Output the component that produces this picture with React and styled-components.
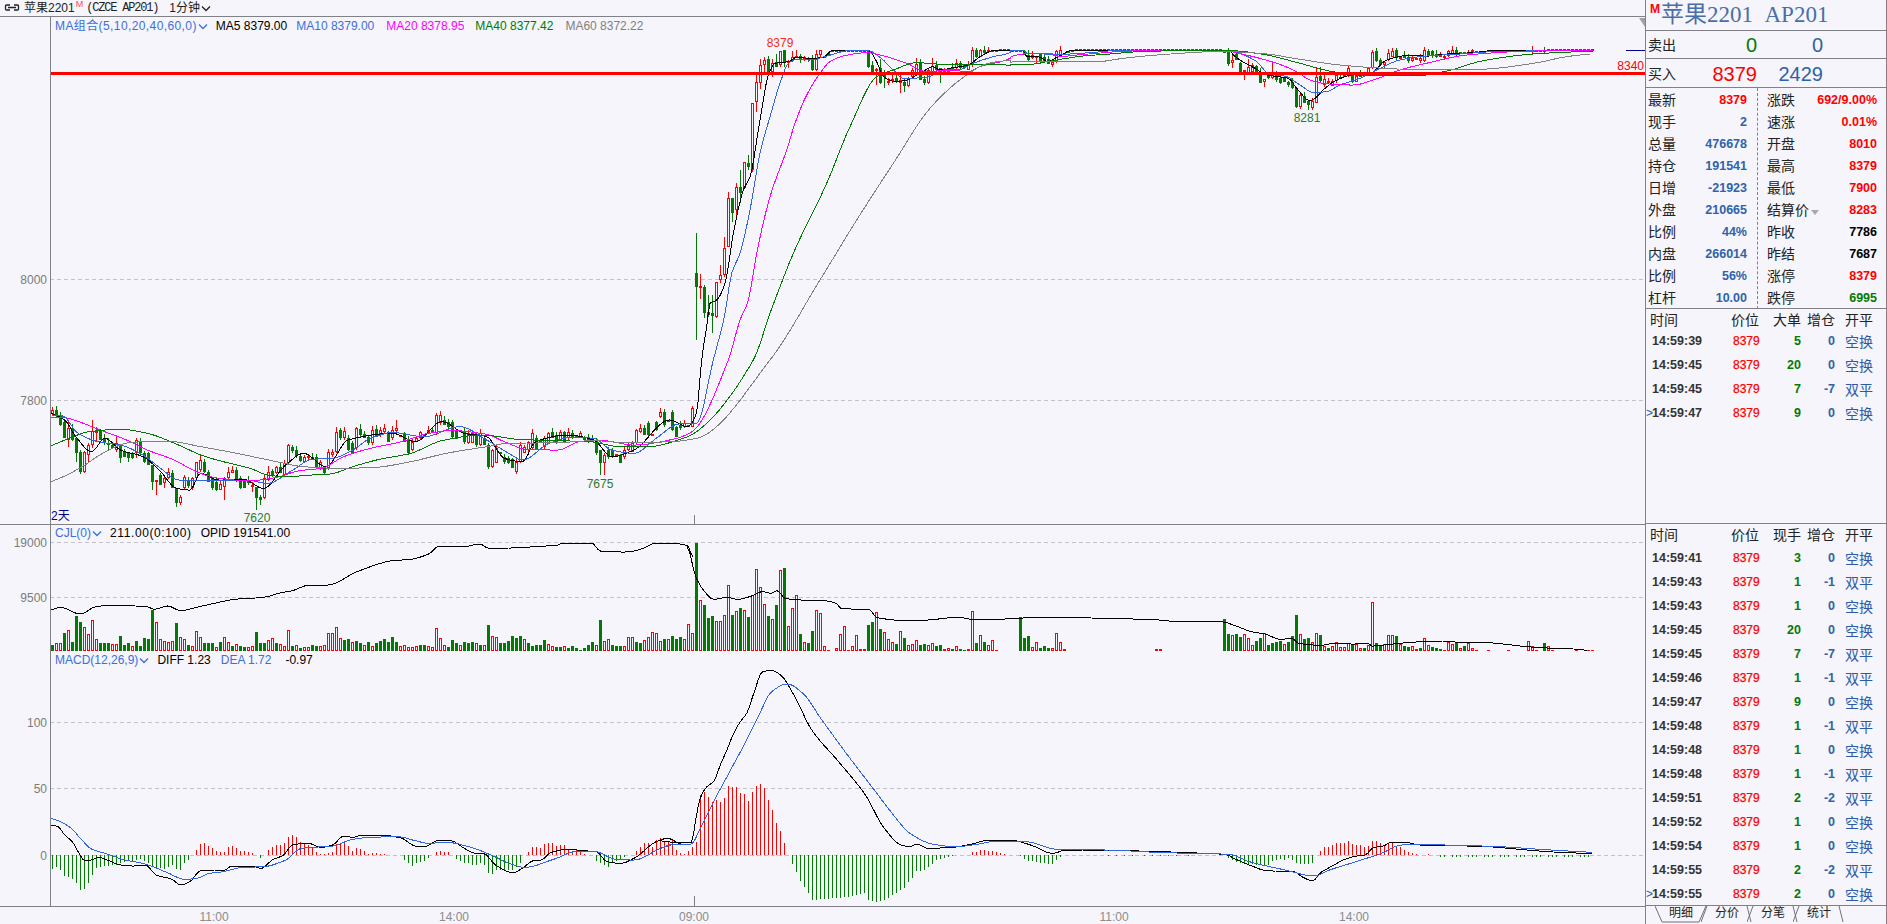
import React from 'react';
import styled, { createGlobalStyle } from 'styled-components';

const BG = '#f5f5fb';
const RED = '#ff0000';
const GREEN = '#047a04';
const BLUE = '#2f62a8';
const LINE = '#808088';
const CJK = '"Liberation Sans", "Noto Sans CJK SC", sans-serif';

/* ---------- coordinate helpers: each reads px from a measured crop ---------- */
const Z = {
  z5: [(x) => x / 2.24, (y) => y / 3 + 400],
  z6: [(x) => x / 3 + 660, (y) => y / 3 + 20],
  z7: [(x) => x / 2.24 + 660, (y) => y / 3 + 520],
  z8: [(x) => x / 3 + 1200, (y) => y / 3 + 30],
  z9: [(x) => x / 2.24, (y) => y / 3 + 650],
  z10: [(x) => x / 3 + 1340, (y) => y / 3 + 560],
  z11: [(x) => x / 3 + 990, (y) => y / 3 + 40],
  z12: [(x) => x / 3 + 50, (y) => y / 3 + 410],
};
const conv = (k, pts) => pts.map(([x, y]) => [Z[k][0](x), Z[k][1](y)]);
const cx = (i) => 52 + 4 * i;
const idx = (x) => Math.round((x - 52) / 4);

/* monotone cubic through the measured points, sampled every couple of pixels */
const smooth = (pts) => {
  const d = [];
  for (let k = 0; k < pts.length - 1; k++) {
    d.push((pts[k + 1][1] - pts[k][1]) / Math.max(pts[k + 1][0] - pts[k][0], 0.5));
  }
  const m = pts.map((_, k) => {
    if (k === 0) return d[0];
    if (k === pts.length - 1) return d[d.length - 1];
    if (d[k - 1] * d[k] <= 0) return 0;
    return (2 * d[k - 1] * d[k]) / (d[k - 1] + d[k]);
  });
  const out = [pts[0]];
  for (let k = 0; k < pts.length - 1; k++) {
    const [x0, y0] = pts[k];
    const [x1, y1] = pts[k + 1];
    const h = x1 - x0;
    if (h <= 0.5) { out.push(pts[k + 1]); continue; }
    const n = Math.max(1, Math.round(h / 2));
    for (let j = 1; j <= n; j++) {
      const t = j / n;
      const a = (1 + 2 * t) * (1 - t) * (1 - t);
      const b = t * (1 - t) * (1 - t);
      const c = t * t * (3 - 2 * t);
      const e = t * t * (t - 1);
      out.push([x0 + h * t, a * y0 + b * h * m[k] + c * y1 + e * h * m[k + 1]]);
    }
  }
  return out;
};
const toPts = (p) => smooth(p).map(([x, y]) => `${x.toFixed(1)},${y.toFixed(1)}`).join(' ');

/* ---------- moving averages ---------- */
const MA5 = [
  ...conv('z5', [[115,40],[145,60],[170,110],[205,155],[235,115],[270,150],[320,170],[360,215],[395,265],[425,270],[450,220],[490,240],[545,238],[590,265],[640,195],[680,160],[730,200],[780,120],[880,100],[930,125],[990,65],[1040,100],[1090,110],[1130,175],[1170,185],[1200,125],[1270,105],[1330,120],[1370,170],[1420,150],[1500,60],[1540,80],[1560,40]]),
  ...conv('z6', [[125,1020],[140,920],[150,850],[170,840],[195,790],[220,640],[250,510],[270,470],[300,300],[325,165],[345,130],[385,125],[410,112],[450,115],[490,112],[515,92],[625,92],[650,125],[670,170],[710,185],[740,180],[780,160],[820,140],[840,150],[880,143],[925,135],[960,110],[1000,92],[1050,90]]),
  ...conv('z11', [[60,32],[100,32],[110,50],[130,48],[150,52],[175,65],[195,55],[215,45],[240,32],[300,30],[620,31],[720,31]]),
  ...conv('z8', [[100,75],[120,90],[165,115],[200,135],[265,145],[290,175],[330,212],[345,205],[375,175],[410,150],[470,132],[510,130],[560,90],[620,77],[680,78],[740,72],[820,68],[880,62],[1180,61]]),
];
const MA10 = [
  ...conv('z5', [[115,45],[140,48],[175,100],[220,125],[270,135],[320,165],[360,205],[400,240],[440,240],[490,240],[550,240],[600,250],[650,215],[700,178],[745,175],[790,150],[830,115],[880,98],[950,110],[1030,80],[1090,120],[1140,160],[1170,180],[1230,130],[1280,112],[1330,115],[1370,150],[1420,160],[1470,115],[1520,72],[1560,70]]),
  ...conv('z6', [[160,1020],[195,880],[215,760],[240,700],[270,570],[300,400],[330,290],[360,190],[385,130],[410,118],[450,120],[500,108],[570,92],[625,92],[660,112],[700,150],[730,175],[800,172],[850,150],[900,148],[940,130],[1000,110],[1050,98]]),
  ...conv('z11', [[60,32],[100,32],[115,42],[140,40],[190,45],[240,42],[300,38],[380,32],[620,31],[720,31]]),
  ...conv('z8', [[100,64],[125,72],[170,95],[205,130],[260,140],[300,165],[340,187],[380,185],[420,165],[480,145],[540,115],[600,90],[680,78],[780,72],[900,64],[1180,61]]),
];
const MA20 = [
  ...conv('z5', [[115,52],[140,52],[170,62],[220,88],[280,118],[330,150],[390,180],[440,215],[490,235],[560,242],[620,232],[670,212],[720,205],[770,170],[830,145],[900,125],[960,100],[1010,92],[1090,103],[1130,125],[1180,148],[1250,150],[1300,125],[1350,122],[1420,135],[1500,120],[1550,95]]),
  ...conv('z6', [[205,1020],[240,900],[265,840],[290,700],[330,530],[380,390],[405,310],[440,225],[480,160],[510,125],[550,108],[620,98],[660,105],[740,130],[800,155],[870,150],[925,155],[960,140],[1050,115]]),
  ...conv('z11', [[60,52],[100,42],[180,40],[210,50],[260,45],[320,40],[420,33],[620,31],[720,32]]),
  ...conv('z8', [[100,66],[160,80],[230,100],[290,125],[330,150],[385,162],[460,165],[520,150],[600,120],[700,95],[800,75],[1000,63],[1180,61]]),
];
const MA40 = [
  ...conv('z5', [[115,137],[150,118],[200,95],[270,88],[330,100],[400,135],[450,165],[500,185],[560,205],[600,225],[640,230],[700,225],[740,222],[790,200],[850,178],[920,160],[990,122],[1080,105],[1160,118],[1250,122],[1320,125],[1390,140],[1450,140],[1530,115],[1560,95]]),
  ...conv('z6', [[280,1020],[330,880],[400,700],[500,490],[570,320],[650,170],[700,150],[770,128],[835,132],[930,132],[1050,135]]),
  ...conv('z11', [[60,74],[110,74],[170,65],[280,48],[360,42],[430,36],[620,31],[700,31]]),
  ...conv('z8', [[100,62],[200,75],[300,100],[400,125],[500,137],[650,137],[740,123],[850,92],[1000,72],[1180,63]]),
];
const MA60 = [
  ...conv('z5', [[115,245],[150,225],[190,195],[230,160],[290,128],[370,123],[450,140],[530,160],[620,185],[680,200],[760,205],[840,202],[920,185],[1000,160],[1090,140],[1140,130],[1250,128],[1330,122],[1400,128],[1500,125],[1560,115]]),
  ...conv('z6', [[330,1020],[480,780],[590,600],[700,430],[810,265],[920,165],[985,130],[1050,122]]),
  ...conv('z11', [[60,66],[110,65],[320,65],[400,55],[500,45],[620,37],[700,33]]),
  ...conv('z8', [[100,65],[200,72],[300,88],[420,105],[520,113],[640,118],[830,118],[1000,100],[1100,80],[1170,72]]),
];

const interp = (pts, x) => {
  for (let k = 1; k < pts.length; k++) {
    if (x <= pts[k][0]) {
      const [x0, y0] = pts[k - 1];
      const [x1, y1] = pts[k];
      return y0 + ((y1 - y0) * (x - x0)) / Math.max(x1 - x0, 0.01);
    }
  }
  return pts[pts.length - 1][1];
};

/* ---------- candles: [x, colour, bodyTop, bodyBottom, high, low] ---------- */
const C12 = [[6,'r',0,12,-8,14],[18,'g',0,15],[30,'g',15,45],[42,'g',35,85],[54,'r',55,90,30,110],[66,'g',55,90],[78,'g',85,130,85,155],[90,'g',125,185],[102,'r',125,187],[114,'r',105,135,100,160],[126,'r',62,105,30,115],[138,'r',62,70,50,95],[150,'g',60,90],[162,'g',85,100],[174,'g',100,105,85,122],[186,'g',105,115],[198,'r',100,120,75,125],[210,'g',105,145,105,160],[222,'g',125,140],[234,'g',125,145,125,155],[246,'g',130,145],[258,'r',90,130,85,145],[270,'g',92,130],[282,'g',130,155],[294,'g',130,165],[306,'g',165,215,165,240],[318,'r',210,215,210,255],[330,'g',195,225],[342,'r',205,220,195,235],[354,'r',185,205],[366,'g',190,235],[378,'g',235,280,235,290],[390,'r',260,278,255,285],[402,'r',200,235,195,240],[414,'g',210,228],[426,'r',205,235,200,240],[438,'r',155,205,155,212],[450,'r',150,180,135,185],[462,'g',155,185],[474,'g',185,215],[486,'g',205,235],[498,'g',215,240],[510,'r',222,240],[522,'r',205,230,200,270],[534,'r',185,205,170,210],[546,'r',180,190],[558,'g',180,210],[570,'g',205,235],[582,'g',210,235],[594,'g',210,220],[606,'r',225,230,215,245],[618,'g',230,265,230,300],[630,'g',260,270,255,285],[642,'r',205,265],[654,'r',185,210,168,212],[666,'g',182,195],[678,'r',172,190],[690,'g',170,190],[702,'r',160,195],[714,'r',105,160,102,165],[726,'g',110,122,105,128],[738,'g',120,138],[750,'g',138,152],[762,'r',140,155],[774,'r',138,145,132,150],[786,'g',140,148],[798,'g',142,175],[810,'r',155,175],[822,'g',170,188],[834,'r',125,175,118,180],[846,'r',125,135],[858,'r',65,125,52,128],[870,'g',60,85,55,90],[882,'r',62,85],[894,'g',85,120],[906,'g',98,130],[918,'r',55,115,50,120],[930,'g',58,75,42,80],[942,'g',72,85],[954,'g',80,100],[966,'r',60,100,48,104],[978,'g',58,80],[990,'r',60,75],[1002,'r',55,65,42,70],[1014,'g',65,95],[1026,'r',60,85],[1038,'r',55,62,30,70]];
const C5 = [[905,'g',100,125],[915,'g',120,160],[925,'r',125,150],[935,'r',115,125],[945,'r',95,115],[955,'r',90,100],[965,'g',90,100],[975,'r',45,100],[985,'r',45,70,32,75],[995,'g',60,75],[1005,'g',65,80],[1015,'g',65,110],[1025,'g',90,118],[1035,'g',95,125],[1045,'r',100,130],[1055,'r',100,130],[1065,'g',105,135],[1075,'r',100,135],[1085,'g',115,135],[1095,'g',135,200],[1105,'r',150,200],[1115,'r',145,190],[1125,'g',170,185],[1135,'g',175,190],[1145,'g',178,205],[1155,'r',185,215],[1165,'r',135,185],[1175,'r',140,160],[1185,'r',125,150],[1195,'r',100,145],[1205,'g',115,150],[1215,'r',115,140],[1225,'r',100,130],[1235,'g',95,115],[1245,'g',105,125],[1255,'r',95,120],[1265,'g',95,125],[1275,'r',95,115],[1285,'g',100,115],[1295,'r',100,115],[1305,'g',110,120],[1315,'g',115,125],[1325,'g',115,125],[1335,'g',120,160],[1345,'g',150,190,150,225],[1355,'r',165,190,160,225],[1365,'g',150,170],[1375,'g',150,170],[1385,'g',165,190],[1395,'r',150,170],[1405,'r',135,150],[1415,'r',130,155],[1425,'r',90,130],[1435,'r',85,95],[1445,'g',85,105],[1455,'g',70,105],[1465,'g',65,90],[1475,'r',35,50,25,55],[1490,'g',35,75],[1505,'g',35,90],[1515,'g',80,110],[1525,'g',75,85],[1535,'r',70,80],[1550,'r',25,80],[1560,'r',0,25]];
const C6 = [[109,'g',760,800,640,960],[121,'r',798,805,762,838],[133,'g',800,880,795,895],[145,'g',875,885,825,890],[157,'g',878,888,825,940],[169,'r',785,890,785,895],[181,'r',765,780,735,790],[193,'r',683,765,650,770],[205,'r',535,680,515,682],[217,'g',535,578,535,605],[229,'r',502,570,490,600],[241,'g',502,518,450,550],[253,'r',427,505,427,508],[265,'g',430,440,405,450],[277,'r',248,450,248,455],[289,'r',187,247,165,275],[301,'r',135,190,118,208],[313,'r',120,135,112,155],[325,'g',118,155],[337,'r',128,155,118,170],[349,'g',125,140,102,142],[361,'r',92,135,92,140],[373,'g',90,125,90,140],[385,'r',123,125,120,145],[397,'r',112,120,92,125],[409,'r',108,112,90,115],[421,'g',108,118,102,128],[433,'r',112,118,108,122],[445,'g',115,120,112,125],[457,'g',118,150],[469,'r',103,150,90,152],[481,'r',90,105,90,115],
  [625,'g',92,140],[637,'g',135,155],[649,'r',147,150,145,195],[661,'g',145,190,118,192],[673,'g',165,170,150,205],[685,'r',182,186,175,195],[697,'r',178,182,165,190],[709,'g',175,187,165,190],[721,'r',180,190,165,218],[733,'g',185,198,175,215],[745,'r',178,198,172,200],[757,'r',150,172],[769,'r',132,160,115,162],[781,'g',128,180],[793,'g',178,190],[805,'r',150,188],[817,'r',138,160,115,162],[829,'g',135,150],[841,'g',145,155,145,188],[853,'r',150,155],[865,'r',150,155],[877,'g',140,148],[889,'r',130,145,118,147],[901,'g',128,145],[913,'g',135,145],[925,'r',135,150],[937,'r',90,135],[949,'g',90,112],[961,'r',90,110],[973,'g',90,98],[985,'r',90,95]];
const C11 = [[100,'g',32,46],[115,'g',45,60,30,62],[127,'r',45,55,33,57],[139,'r',48,50,48,68],[151,'g',42,65],[163,'g',50,62],[175,'g',58,72],[187,'r',65,75],[199,'r',32,62,30,68],[211,'r',30,50]];
const C8 = [[72,'g',65,70],[85,'g',65,102],[97,'r',90,100,70,115],[109,'g',72,90],[121,'g',98,125],[133,'r',120,125,120,150],[145,'r',112,130,88,132],[157,'r',105,125],[169,'g',108,125],[181,'g',125,158],[193,'r',148,155,148,170],[205,'g',135,145],[217,'r',125,145,100,147],[229,'g',135,150],[241,'g',145,160],[253,'g',145,155],[265,'g',155,165],[277,'g',155,175],[289,'g',175,230,175,235],[301,'r',195,230],[313,'g',198,218,185,220],[325,'g',212,225,212,240],[337,'r',212,235],[349,'r',140,218,112,220],[361,'g',138,152,112,155],[373,'r',148,165],[385,'r',152,160],[397,'r',152,168],[409,'r',135,152],[421,'g',140,145],[433,'r',135,142],[445,'r',115,135],[457,'g',135,155],[469,'r',138,155],[481,'g',130,140,120,142],[493,'g',135,137],[505,'r',115,135],[517,'r',65,115,60,117],[529,'g',63,92],[541,'g',90,105],[553,'r',95,105,95,115],[565,'r',70,90],[577,'r',62,80],[589,'g',60,85],[601,'r',80,85],[613,'g',75,85],[625,'g',82,92],[637,'r',85,92],[649,'r',85,90],[661,'r',85,92],[673,'r',60,92],[685,'g',62,78],[697,'g',62,78],[709,'g',72,80],[721,'r',75,80],[733,'r',78,85],[745,'r',62,78],[757,'r',60,75],[769,'g',60,72],[805,'r',65,70],[817,'r',60,65],[997,'r',61,66],[1037,'g',61,65]];

const LAST = 385;
const buildCandles = () => {
  const slots = new Array(LAST + 1).fill(null);
  const put = (list, k) => list.forEach(([x, c, t, b, h, l], n) => {
    const i = idx(Z[k][0](x));
    const fy = Z[k][1];
    const top = fy(t);
    const bot = fy(b);
    const pad = 1 + (n * 7) % 4;
    slots[i] = { c, top, bot, hi: h === undefined ? top - pad : fy(h), lo: l === undefined ? bot + ((n * 5) % 3) : fy(l) };
  });
  put(C12, 'z12');
  put(C5, 'z5');
  put(C6, 'z6');
  put(C11, 'z11');
  put(C8, 'z8');
  for (let i = 0; i <= LAST; i++) {
    if (!slots[i]) {
      const y = interp(MA5, cx(i));
      slots[i] = { c: i % 3 ? 'g' : 'r', top: y - 1, bot: y + 1, hi: y - 1, lo: y + 1 };
    }
  }
  return slots;
};
const candles = buildCandles();

/* ---------- volume: tops; positive red, negative green ---------- */
const VOL_LEFT = [-735,730,730,-700,690,-725,-648,-665,680,702,660,716,-728,-728,-728,733,733,-708,-735,-728,738,-722,-738,-714,-718,-630,665,718,722,725,722,-670,712,716,-735,738,692,712,-730,-728,-730,740,-725,712,725,-738,732,-738,-740,742,738,-695,-728,-728,720,715,-730,732,738,690,-738,735,-745,742,742,-735,-738,738,735,700,698,682,715,-720,-718,725,-722,-728,735,-725,738,-730,-722,-718,-725,-712,-725,738,735,740,740,738,-735,-735,738,740,685,715,735,-742,-720,-728,735,-725,-730,-725,730,-735,735,-675,708,712,-730,-728,-722,-708,-714,-708,716,-730,-738,-735,-735,-720,732,738,-740,-740,738,-745,-738,-745,-750,-745,-735,-725,735,-660,722,716,-735,-738,-738,738,712,712,-725,-730,720,712,697,698,722,-716,716,-708,-718,-712,718,672,700];
const V7 = [[81,'g',68],[90,'r',240],[99,'g',255],[108,'g',295],[117,'g',288],[126,'r',303],[135,'r',303],[144,'r',286],[153,'r',195],[162,'g',285],[171,'r',273],[180,'g',265],[189,'r',270],[198,'g',291],[207,'r',225],[216,'r',148],[225,'r',202],[234,'r',252],[243,'g',288],[252,'r',297],[261,'g',255],[270,'r',150],[279,'g',145],[288,'r',318],[297,'r',265],[306,'r',226],[315,'g',342],[324,'r',366],[333,'g',370],[342,'g',333],[351,'r',270],[360,'r',280],[369,'r',378],[378,'r',390],[396,'r',384],[405,'r',342],[414,'r',318],[423,'r',390],[432,'r',378],[441,'r',345],[450,'r',388],[459,'r',387],[468,'g',315],[477,'g',306],[486,'r',277],[495,'g',327],[504,'r',335],[513,'r',357],[522,'r',366],[531,'g',372],[540,'r',334],[549,'g',354],[558,'r',375],[567,'r',372],[576,'r',360],[585,'g',375],[594,'g',372],[603,'r',376],[612,'r',370],[621,'g',378],[630,'g',375],[639,'r',387],[648,'r',384],[657,'g',387],[666,'r',378],[675,'g',387],[684,'g',390],[693,'r',388],[702,'r',273],[711,'g',369],[720,'r',345],[729,'g',366],[738,'r',375],[747,'r',360],[756,'r',390],[807,'g',291],[816,'g',354],[825,'g',348],[834,'r',382],[843,'r',366],[852,'g',384],[861,'g',378],[870,'g',384],[879,'r',384],[888,'r',340],[897,'r',366],[906,'r',387],[1113,'r',387],[1120,'r',387],[1265,'g',297],[1274,'g',342],[1283,'r',345],[1292,'g',342],[1301,'g',352],[1310,'r',342],[1319,'r',354],[1328,'r',375],[1337,'g',363],[1346,'g',355],[1355,'r',340],[1364,'g',375],[1373,'g',368],[1382,'g',365],[1391,'g',363],[1400,'r',372],[1409,'g',365],[1418,'g',348],[1427,'g',285],[1436,'r',342],[1445,'g',357],[1454,'g',354],[1463,'r',365],[1472,'r',340],[1481,'g',345],[1490,'r',378],[1499,'g',385],[1508,'r',378],[1517,'r',366],[1526,'r',380],[1535,'r',380],[1544,'r',370],[1553,'g',372]];
const V10 = [[0,'r',262],[12,'r',262],[24,'r',250],[36,'g',252],[48,'r',252],[60,'r',265],[72,'g',265],[84,'r',255],[96,'r',127],[108,'g',250],[120,'g',258],[132,'r',253],[144,'r',226],[156,'r',226],[168,'g',228],[180,'r',252],[192,'g',258],[204,'g',260],[216,'r',258],[228,'r',268],[240,'g',264],[252,'r',235],[264,'r',255],[276,'g',262],[288,'g',264],[300,'g',267],[312,'r',270],[324,'r',245],[336,'r',252],[348,'g',248],[360,'r',264],[372,'g',258],[384,'r',250],[396,'r',264],[408,'r',270],[444,'r',270],[504,'r',270],[564,'r',243],[576,'r',258],[588,'r',270],[612,'g',250],[624,'r',258],[636,'r',270],[708,'r',268],[744,'r',270],[756,'r',270]];
const volumes = [
  ...VOL_LEFT.map((v, i) => ({ i, c: v > 0 ? 'r' : 'g', top: Math.abs(v) / 3 + 400 })),
  ...V7.map(([x, c, t]) => ({ i: idx(Z.z7[0](x)), c, top: Z.z7[1](t) })),
  ...V10.map(([x, c, t]) => ({ i: idx(Z.z10[0](x)), c, top: Z.z10[1](t) })),
];
const OPID = [
  ...conv('z5', [[115,630],[135,622],[180,642],[215,620],[250,616],[330,620],[345,628],[375,618],[405,632],[440,622],[480,610],[525,598],[590,592],[630,578],[655,572],[690,556],[735,555],[800,515],[880,482],[920,478],[960,462],[985,438],[1040,440],[1075,432],[1095,445],[1250,435],[1260,429],[1325,429],[1345,453],[1400,456],[1430,450],[1470,430],[1505,430],[1540,437],[1552,470]]),
  ...conv('z7', [[60,80],[80,170],[100,215],[120,238],[150,232],[175,238],[205,228],[230,215],[250,220],[262,212],[280,235],[320,240],[355,240],[395,250],[405,265],[470,270],[485,293],[560,302],[600,300],[670,292],[700,298],[800,296],[825,292],[890,292],[1020,296],[1100,298],[1140,303],[1260,306],[1290,318],[1325,335],[1355,342],[1390,358],[1415,355],[1430,370],[1480,376],[1510,370]]),
  ...conv('z10', [[0,250],[40,252],[85,250],[95,258],[160,252],[210,247],[270,244],[320,243],[345,246],[440,248],[490,252],[560,260],[640,265],[700,267],[740,271]]),
];

/* ---------- MACD ---------- */
const DIFF = [
  ...conv('z9', [[115,525],[130,530],[145,555],[162,575],[175,605],[190,632],[205,630],[220,622],[240,630],[270,645],[300,648],[325,645],[350,675],[385,688],[405,705],[425,695],[450,662],[480,660],[500,662],[520,648],[565,648],[585,655],[610,630],[635,615],[655,585],[690,580],[720,592],[745,585],[770,558],[790,562],[810,556],[860,556],[900,565],[930,588],[950,590],[985,570],[1010,572],[1040,595],[1065,610],[1085,612],[1110,645],[1150,668],[1170,655],[1195,632],[1212,630],[1235,607],[1275,598],[1305,602],[1335,605],[1360,635],[1390,640],[1420,625],[1470,575],[1495,565],[1525,580]]),
  ...conv('z7', [[0,962],[20,955],[40,968],[70,968],[80,900],[90,835],[105,800],[120,785],[135,735],[150,690],[165,640],[180,605],[195,578],[210,520],[230,455],[250,452],[270,465],[300,525],[340,630],[400,725],[460,825],[500,920],[540,975],[560,980],[575,972],[600,985],[655,982],[700,972],[730,962],[790,962],[830,975],[880,1000],[910,990],[1265,1003],[1290,1018],[1320,1035],[1360,1052],[1420,1055],[1440,1072],[1462,1082],[1480,1058],[1510,1035]]),
  ...conv('z10', [[15,898],[50,888],[75,885],[100,863],[130,858],[155,847],[200,848],[240,855],[300,856],[380,858],[440,860],[560,870],[640,876],[755,881]]),
];
const DEA = [
  ...conv('z9', [[115,505],[130,512],[160,535],[180,565],[205,597],[240,612],[280,630],[320,640],[370,665],[415,688],[440,685],[470,670],[500,665],[545,652],[590,650],[640,630],[675,595],[700,592],[745,588],[790,568],[830,562],[890,560],[930,572],[960,580],[1000,577],[1050,590],[1100,615],[1140,640],[1175,652],[1240,628],[1290,605],[1330,604],[1380,628],[1420,630],[1480,595],[1510,582]]),
  ...conv('z7', [[0,985],[30,972],[70,972],[90,925],[120,845],[150,770],[190,670],[220,590],[250,515],[285,492],[320,520],[360,595],[420,705],[480,810],[520,880],[560,940],[610,972],[660,980],[700,975],[760,963],[820,965],[890,988],[1000,990],[1130,998],[1275,1003],[1320,1025],[1400,1050],[1465,1068],[1500,1050]]),
  ...conv('z10', [[70,898],[130,878],[170,858],[200,854],[320,855],[480,860],[600,868],[755,877]]),
];
const H9 = [657,650,660,678,682,688,700,720,718,700,675,655,650,648,647,645,645,640,635,632,632,630,628,632,640,650,655,655,658,650,645,658,660,640,630,616,600,582,578,588,595,603,605,605,592,588,595,603,603,605,608,615,624,615,600,590,586,585,580,560,555,560,575,582,585,595,605,613,612,610,605,582,580,575,588,603,595,597,603,613,608,608,612,612,615,615,616,616,630,640,648,640,635,632,625,615,605,603,605,607,616,628,632,638,640,645,645,640,645,670,672,660,660,660,660,660,650,640,616,605,592,592,595,582,578,578,588,585,585,600,603,600,603,612,616,616,632,640,645,650,640,632,628,620,616,616,602,590,580,578,590,570,563,575,575,570,600,610,613,603,590];
const H7A = [965,825,815,830,845,840,845,835,798,800,800,820,822,842,815,797,792,805,840,870,908,932,970,1006,1032,1055,1082,1100,1120,1140,1140,1136,1136,1136,1135,1134,1134,1132,1130,1128,1125,1122,1118,1140,1142,1145,1142,1140,1135,1125,1118,1110,1105,1085,1075,1052,1052,1050,1040,1032,1020,1018,1014,1012,1008];
const H7B = [[702,995],[711,995],[720,990],[729,990],[738,992],[747,994],[756,997],[765,1000],[774,1002],[783,1004],[792,1005],[810,1008],[819,1016],[828,1022],[837,1024],[846,1026],[855,1028],[864,1030],[873,1032],[882,1032],[891,1020],[900,1010],[925,1004],[940,1004],[955,1004],[1000,1008],[1020,1008],[1040,1008],[1060,1008],[1080,1008],[1100,1008],[1120,1008],[1140,1008],[1160,1008],[1180,1008],[1270,1015],[1279,1020],[1288,1025],[1297,1030],[1306,1032],[1315,1033],[1324,1033],[1333,1034],[1342,1034],[1351,1034],[1360,1034],[1369,1022],[1378,1020],[1387,1018],[1396,1020],[1405,1015],[1414,1020],[1423,1030],[1432,1032],[1441,1032],[1450,1032],[1459,1030],[1479,992],[1488,982],[1497,980],[1506,975],[1515,968],[1524,966],[1533,965],[1542,970],[1551,975],[1560,980]];
const H10 = [[0,850],[12,850],[24,843],[36,852],[48,855],[60,855],[72,862],[84,858],[96,843],[108,843],[120,850],[132,855],[144,852],[156,850],[168,858],[180,860],[192,870],[204,876],[216,880],[228,882],[264,882],[276,884]];
const ZERO = 855;
const macdBars = {};
H9.forEach((t, i) => { macdBars[i] = t / 3 + 650; });
H7A.forEach((t, k) => { macdBars[161 + k] = t / 3 + 520; });
H7B.forEach(([x, t]) => { macdBars[idx(Z.z7[0](x))] = t / 3 + 520; });
H10.forEach(([x, t]) => { macdBars[idx(Z.z10[0](x))] = t / 3 + 560; });
for (let x = 300; x <= 755; x += 12) if ((x / 12) % 4 !== 3) macdBars[idx(Z.z10[0](x))] = 857;
const macdPath = (sign) => Object.entries(macdBars)
  .filter(([, t]) => (sign > 0 ? t < ZERO : t > ZERO))
  .map(([i, t]) => `M${cx(+i) + 0.5} ${ZERO}V${t.toFixed(0)}`).join('');

/* ---------- side panel data ---------- */
const stats = [
  ['最新', '8379', RED, '涨跌', '692/9.00%', RED],
  ['现手', '2', BLUE, '速涨', '0.01%', RED],
  ['总量', '476678', BLUE, '开盘', '8010', RED],
  ['持仓', '191541', BLUE, '最高', '8379', RED],
  ['日增', '-21923', BLUE, '最低', '7900', RED],
  ['外盘', '210665', BLUE, '结算价', '8283', RED],
  ['比例', '44%', BLUE, '昨收', '7786', '#000'],
  ['内盘', '266014', BLUE, '昨结', '7687', '#000'],
  ['比例', '56%', BLUE, '涨停', '8379', RED],
  ['杠杆', '10.00', BLUE, '跌停', '6995', GREEN],
];
const bigTrades = [
  ['14:59:39', 5, 0, '空换'],
  ['14:59:45', 20, 0, '空换'],
  ['14:59:45', 7, -7, '双平'],
  ['14:59:47', 9, 0, '空换'],
];
const allTrades = [
  ['14:59:41', 3, 0, '空换'],['14:59:43', 1, -1, '双平'],['14:59:43', 1, 0, '空换'],['14:59:45', 20, 0, '空换'],['14:59:45', 7, -7, '双平'],['14:59:46', 1, -1, '双平'],['14:59:47', 9, 0, '空换'],['14:59:48', 1, -1, '双平'],['14:59:48', 1, 0, '空换'],['14:59:48', 1, -1, '双平'],['14:59:51', 2, -2, '双平'],['14:59:52', 1, 0, '空换'],['14:59:54', 1, 0, '空换'],['14:59:55', 2, -2, '双平'],['14:59:55', 2, 0, '空换'],
];

/* ---------- styled parts ---------- */
const Global = createGlobalStyle`
  html, body { margin: 0; padding: 0; background: ${BG}; overflow: hidden; }
  * { box-sizing: border-box; }
`;
const Page = styled.div`
  display: flex; width: 1887px; height: 924px; background: ${BG};
  font-family: ${CJK}; color: #222; overflow: hidden;
`;
const ChartColumn = styled.div`
  display: flex; flex-direction: column; width: 1645px; flex: none;
`;
const TitleBar = styled.div`
  display: flex; align-items: center; height: 17px; padding-left: 4px; flex: none;
  border-bottom: 1px solid ${LINE}; font-size: 12px; line-height: 16px; color: #222; white-space: nowrap;
`;
const LinkIcon = styled.svg`
  width: 16px; height: 8px; margin-right: 4px; flex: none;
`;
const SmallM = styled.span`
  color: #ff5050; font-size: 9px; margin: -5px 3px 0 1px; align-self: flex-start; line-height: 14px; padding-top: 2px;
`;
const MonoText = styled.span`
  font-family: "Liberation Mono", monospace; font-size: 12px; letter-spacing: -1.2px; width: 83px; flex: none;
`;
const Pane = styled.div`
  position: relative; flex: none; width: 1645px; height: ${(p) => p.$h}px;
  ${(p) => (p.$border ? `border-bottom: 1px solid ${LINE};` : '')}
  overflow: hidden;
`;
const ChartSvg = styled.svg`
  display: block; width: 1645px; height: 100%;
`;
const Legend = styled.div`
  position: absolute; left: 55px; top: ${(p) => p.$top}px; display: flex; align-items: center;
  font-size: 12px; line-height: 16px; white-space: nowrap; color: #000;
`;
const LegendItem = styled.span`
  color: ${(p) => p.$c || '#000'}; margin-left: ${(p) => p.$ml || 0}px;
  letter-spacing: ${(p) => p.$ls || 0}px;
`;
const Caret = styled.svg`
  width: 10px; height: 7px; margin-left: ${(p) => p.$ml || 2}px; flex: none;
`;
const Side = styled.aside`
  display: flex; flex-direction: column; width: 242px; height: 924px; flex: none;
  border-left: 1px solid ${LINE}; border-right: 1px solid ${LINE};
`;
const Header = styled.div`
  display: flex; align-items: flex-start; height: 31px; flex: none; padding-left: 4px;
  border-bottom: 1px solid ${LINE}; color: #4a6ea8; font-family: "Liberation Serif", "Noto Sans CJK SC", serif;
  font-size: 23px; line-height: 30px; white-space: pre;
`;
const HeaderM = styled.span`
  color: ${RED}; font: bold 12px/14px "Liberation Sans", sans-serif; margin-right: 1px; padding-top: 2px;
`;
const QuoteRow = styled.div`
  display: grid; grid-template-columns: 44px 65px 66px; align-items: center; height: ${(p) => p.$h}px; flex: none;
  padding: 1px 0 0 2px; border-bottom: 1px solid ${LINE};
`;
const QuoteLabel = styled.span`
  font-size: 14px; line-height: 20px; color: #222;
`;
const QuoteValue = styled.span`
  font-family: "Liberation Sans", sans-serif; font-size: 20px; line-height: 24px; text-align: right; color: ${(p) => p.$c};
`;
const StatsGrid = styled.div`
  display: grid; grid-template-columns: 111px 1fr; height: 221px; flex: none;
  border-bottom: 1px solid ${LINE};
`;
const StatCol = styled.div`
  display: flex; flex-direction: column; padding: ${(p) => (p.$right ? '1px 9px 0 9px' : '1px 10px 0 2px')};
  ${(p) => (p.$right ? 'border-left: 1px dashed #808088;' : '')}
`;
const StatRow = styled.div`
  display: flex; justify-content: space-between; align-items: center; height: 22px;
`;
const StatLabel = styled.span`
  font-size: 14px; line-height: 20px; color: #222; display: flex; align-items: center;
`;
const StatValue = styled.span`
  font: bold 12.5px/16px "Liberation Sans", sans-serif; color: ${(p) => p.$c};
`;
const Triangle = styled.i`
  display: inline-block; width: 0; height: 0; margin: 4px 0 0 2px;
  border-left: 4.5px solid transparent; border-right: 4.5px solid transparent; border-top: 5px solid #a8a8b0;
`;
const TradeBox = styled.section`
  height: ${(p) => p.$h}px; flex: none; ${(p) => (p.$border ? `border-bottom: 1px solid ${LINE};` : '')}
`;
const TradeHead = styled.div`
  display: grid; grid-template-columns: 81px 42px 28px 34px 1fr; height: ${(p) => p.$h}px; padding-left: 4px;
  font-size: 14px; line-height: 22px; color: #222; white-space: nowrap;
`;
const TradeRow = styled.div`
  position: relative; display: grid; grid-template-columns: 81px 42px 26px 34px 1fr; align-items: center;
  height: 24px; padding-left: 6px;
`;
const Cell = styled.span`
  text-align: ${(p) => (p.$right ? 'right' : 'left')};
  ${(p) => (p.$pad ? `padding-left: ${p.$pad}px;` : '')}
`;
const TimeCell = styled.span`
  font: bold 12.5px/16px "Liberation Sans", sans-serif; color: #333;
`;
const PriceCell = styled.span`
  font: 12px/16px "Liberation Sans", sans-serif; color: ${RED}; -webkit-text-stroke: 0.25px ${RED};
`;
const VolCell = styled.span`
  font: bold 12.5px/16px "Liberation Sans", sans-serif; color: ${GREEN}; text-align: right;
`;
const IncCell = styled.span`
  font: bold 12.5px/16px "Liberation Sans", sans-serif; color: ${BLUE}; text-align: right;
`;
const ActionCell = styled.span`
  font-size: 14px; line-height: 20px; color: #2d5aa8; padding: 2px 0 0 10px;
`;
const RowMarker = styled.span`
  position: absolute; left: 0; top: 4px; font: 12px/16px "Liberation Sans", sans-serif; color: #2d5aa8;
`;
const TabBar = styled.nav`
  display: flex; height: 18px; flex: none; padding-left: 9px; background: ${BG};
`;
const Tab = styled.div`
  position: relative; width: 52px; height: 17px; margin-right: -6px; text-align: center;
  font-size: 12px; line-height: 15px; color: #222;
  z-index: ${(p) => (p.$active ? 2 : 1)};
`;
const TabShape = styled.svg`
  position: absolute; left: 0; top: 0; width: 52px; height: 17px;
`;
const TabText = styled.span`
  position: relative;
`;

/* ---------- small drawing bits ---------- */
const ChevronDown = ({ color, ml }) => (
  <Caret viewBox="0 0 10 7" $ml={ml}>
    <path d="M1 1.5L5 5.5L9 1.5" fill="none" stroke={color} strokeWidth="1.3" />
  </Caret>
);

const Bars = ({ list, base }) => (
  <g shapeRendering="crispEdges">
    {list.map(({ i, c, top }) => {
      const x = cx(i);
      const t = Math.round(top);
      return c === 'r'
        ? <rect key={i} x={x - 0.5} y={t + 0.5} width="2" height={Math.max(base - t - 1, 1)} fill={BG} stroke={RED} />
        : <rect key={i} x={x - 1} y={t} width="3" height={Math.max(base - t, 1)} fill={GREEN} />;
    })}
  </g>
);

const CandleSet = () => (
  <g shapeRendering="crispEdges">
    {candles.map((k, i) => {
      const x = cx(i);
      const col = k.c === 'r' ? RED : GREEN;
      const t = Math.round(k.top);
      const b = Math.round(k.bot);
      return (
        <g key={i}>
          <line x1={x + 0.5} x2={x + 0.5} y1={Math.round(k.hi)} y2={Math.round(k.lo)} stroke={col} />
          {k.c === 'r'
            ? <rect x={x - 0.5} y={t + 0.5} width="2" height={Math.max(b - t - 1, 1)} fill={BG} stroke={RED} />
            : <rect x={x - 1} y={t} width="3" height={Math.max(b - t, 1)} fill={GREEN} />}
        </g>
      );
    })}
  </g>
);

const Curve = ({ pts, color, w = 1 }) => (
  <polyline points={toPts(pts)} fill="none" stroke={color} strokeWidth={w} shapeRendering="crispEdges" />
);

const Grid = ({ ys }) => (
  <g shapeRendering="crispEdges">
    {ys.map((y) => <line key={y} x1="50" x2="1645" y1={y + 0.5} y2={y + 0.5} stroke="#c2c2ca" strokeDasharray="4 3" />)}
  </g>
);

const AxisLabel = ({ y, children }) => (
  <text x="47" y={y + 4.5} textAnchor="end" fontFamily="Liberation Sans" fontSize="12" fill="#7c7c7c">{children}</text>
);
const Note = ({ x, y, c, children }) => (
  <text x={x} y={y + 4.5} textAnchor="middle" fontFamily="Liberation Sans" fontSize="12" fill={c}>{children}</text>
);
const LeftRule = ({ y1, y2 }) => <line x1="50.5" x2="50.5" y1={y1} y2={y2} stroke={LINE} shapeRendering="crispEdges" />;
const Tick = ({ y1, y2 }) => <line x1="694.5" x2="694.5" y1={y1} y2={y2} stroke={LINE} shapeRendering="crispEdges" />;

const PriceChart = () => (
  <ChartSvg viewBox="0 17 1645 507" preserveAspectRatio="none">
    <Grid ys={[279, 400]} />
    <LeftRule y1="17" y2="524" />
    <Tick y1="515" y2="524" />
    <CandleSet />
    <Curve pts={MA5} color="#000" />
    <Curve pts={MA10} color="#2f66e0" />
    <Curve pts={MA20} color="#ff00ff" />
    <Curve pts={MA40} color="#007a00" />
    <Curve pts={MA60} color="#808080" />
    <rect x="51" y="72" width="1594" height="3" fill={RED} shapeRendering="crispEdges" />
    <rect x="1626" y="50" width="19" height="1" fill="#000090" shapeRendering="crispEdges" />
    <path d="M1639 18L1645 18L1645 27Z" fill="#a0a0a8" />
    <text x="1644" y="69.5" textAnchor="end" fontFamily="Liberation Sans" fontSize="12" fill={RED}>8340</text>
    <AxisLabel y={279}>8000</AxisLabel>
    <AxisLabel y={400}>7800</AxisLabel>
    <Note x={780} y={42} c="#f03020">8379</Note>
    <Note x={257} y={517} c="#2a7a2a">7620</Note>
    <Note x={600} y={483} c="#2a7a2a">7675</Note>
    <Note x={1307} y={117} c="#2a7a2a">8281</Note>
    <text x="51" y="520" fontFamily="Liberation Sans, Noto Sans CJK SC" fontSize="12" fill="#000090">2天</text>
  </ChartSvg>
);

const VolumeChart = () => (
  <ChartSvg viewBox="0 525 1645 126" preserveAspectRatio="none">
    <Grid ys={[542, 597]} />
    <LeftRule y1="525" y2="651" />
    <Bars list={volumes} base={651} />
    <Curve pts={OPID} color="#000" />
    <AxisLabel y={542}>19000</AxisLabel>
    <AxisLabel y={597}>9500</AxisLabel>
  </ChartSvg>
);

const MacdChart = () => (
  <ChartSvg viewBox="0 651 1645 255" preserveAspectRatio="none">
    <Grid ys={[722, 788, 855]} />
    <LeftRule y1="651" y2="907" />
    <Tick y1="896" y2="907" />
    <path d={macdPath(1)} stroke={RED} fill="none" shapeRendering="crispEdges" />
    <path d={macdPath(-1)} stroke={GREEN} fill="none" shapeRendering="crispEdges" />
    <Curve pts={DIFF} color="#000" />
    <Curve pts={DEA} color="#2f66e0" />
    <AxisLabel y={722}>100</AxisLabel>
    <AxisLabel y={788}>50</AxisLabel>
    <AxisLabel y={855}>0</AxisLabel>
  </ChartSvg>
);

const TimeAxis = () => (
  <ChartSvg viewBox="0 907 1645 17" preserveAspectRatio="none">
    {[[214, '11:00'], [454, '14:00'], [694, '09:00'], [1114, '11:00'], [1354, '14:00']].map(([x, t], n) => (
      <text key={n} x={x} y={921} textAnchor="middle" fontFamily="Liberation Sans" fontSize="12" fill="#8c8c8c">{t}</text>
    ))}
  </ChartSvg>
);

const TradeList = ({ head, rows, rowsTop, h, border }) => (
  <TradeBox $h={h} $border={border}>
    <TradeHead $h={rowsTop}>
      <Cell>时间</Cell>
      <Cell>价位</Cell>
      <Cell $right>{head}</Cell>
      <Cell $right>增仓</Cell>
      <Cell $pad={10}>开平</Cell>
    </TradeHead>
    {rows.map(([t, v, d, a], n) => (
      <TradeRow key={n}>
        {n === rows.length - 1 && <RowMarker>&gt;</RowMarker>}
        <TimeCell>{t}</TimeCell>
        <PriceCell>8379</PriceCell>
        <VolCell>{v}</VolCell>
        <IncCell>{d}</IncCell>
        <ActionCell>{a}</ActionCell>
      </TradeRow>
    ))}
  </TradeBox>
);

export default function App() {
  return (
    <Page>
      <Global />
      <ChartColumn>
        <TitleBar>
          <LinkIcon viewBox="0 0 16 8">
            <path d="M6 1H2.5a1 1 0 0 0-1 1v3a1 1 0 0 0 1 1H6M10 1h3.5a1 1 0 0 1 1 1v3a1 1 0 0 1-1 1H10M4 3.5h8" fill="none" stroke="#222" strokeWidth="1.3" />
          </LinkIcon>
          <span>苹果2201</span>
          <SmallM>M</SmallM>
          <MonoText>(CZCE AP201)</MonoText>
          <span>1分钟</span>
          <ChevronDown color="#222" ml={1} />
        </TitleBar>
        <Pane $h={508} $border>
          <PriceChart />
          <Legend $top={1}>
            <LegendItem $c="#3a6fe0" $ls={0.4}>MA组合(5,10,20,40,60,0)</LegendItem>
            <ChevronDown color="#3a6fe0" ml={1} />
            <LegendItem $ml={8}>MA5 8379.00</LegendItem>
            <LegendItem $c="#3a6fe0" $ml={9}>MA10 8379.00</LegendItem>
            <LegendItem $c="#ff00ff" $ml={12}>MA20 8378.95</LegendItem>
            <LegendItem $c="#007a00" $ml={11}>MA40 8377.42</LegendItem>
            <LegendItem $c="#808080" $ml={12}>MA60 8372.22</LegendItem>
          </Legend>
        </Pane>
        <Pane $h={126}>
          <VolumeChart />
          <Legend $top={0}>
            <LegendItem $c="#3a6fe0">CJL(0)</LegendItem>
            <ChevronDown color="#3a6fe0" ml={1} />
            <LegendItem $ml={8} $ls={0.6}>211.00(0:100)</LegendItem>
            <LegendItem $ml={9}>OPID 191541.00</LegendItem>
          </Legend>
        </Pane>
        <Pane $h={256} $border>
          <MacdChart />
          <Legend $top={1}>
            <LegendItem $c="#3a6fe0">MACD(12,26,9)</LegendItem>
            <ChevronDown color="#3a6fe0" ml={1} />
            <LegendItem $ml={8}>DIFF 1.23</LegendItem>
            <LegendItem $c="#3a6fe0" $ml={10}>DEA 1.72</LegendItem>
            <LegendItem $ml={14}>-0.97</LegendItem>
          </Legend>
        </Pane>
        <Pane $h={17}>
          <TimeAxis />
        </Pane>
      </ChartColumn>
      <Side>
        <Header>
          <HeaderM>M</HeaderM>
          <span>苹果2201  AP201</span>
        </Header>
        <QuoteRow $h={28}>
          <QuoteLabel>卖出</QuoteLabel>
          <QuoteValue $c={GREEN}>0</QuoteValue>
          <QuoteValue $c={BLUE}>0</QuoteValue>
        </QuoteRow>
        <QuoteRow $h={29}>
          <QuoteLabel>买入</QuoteLabel>
          <QuoteValue $c={RED}>8379</QuoteValue>
          <QuoteValue $c={BLUE}>2429</QuoteValue>
        </QuoteRow>
        <StatsGrid>
          <StatCol>
            {stats.map(([l, v, c], n) => (
              <StatRow key={n}><StatLabel>{l}</StatLabel><StatValue $c={c}>{v}</StatValue></StatRow>
            ))}
          </StatCol>
          <StatCol $right>
            {stats.map((s, n) => (
              <StatRow key={n}>
                <StatLabel>{s[3]}{s[3] === '结算价' && <Triangle />}</StatLabel>
                <StatValue $c={s[5]}>{s[4]}</StatValue>
              </StatRow>
            ))}
          </StatCol>
        </StatsGrid>
        <TradeList head="大单" rows={bigTrades} rowsTop={20} h={215} border />
        <TradeList head="现手" rows={allTrades} rowsTop={22} h={382} border />
        <TabBar>
          {['明细', '分价', '分笔', '统计'].map((t, n) => (
            <Tab key={t} $active={n === 0}>
              <TabShape viewBox="0 0 52 17">
                <path d={n === 0 ? 'M0 0L7 16H44L51 0' : 'M6 0L0 16M46 0L50 16'} fill={n === 0 ? BG : 'none'} stroke="#707078" />
              </TabShape>
              <TabText>{t}</TabText>
            </Tab>
          ))}
        </TabBar>
      </Side>
    </Page>
  );
}
